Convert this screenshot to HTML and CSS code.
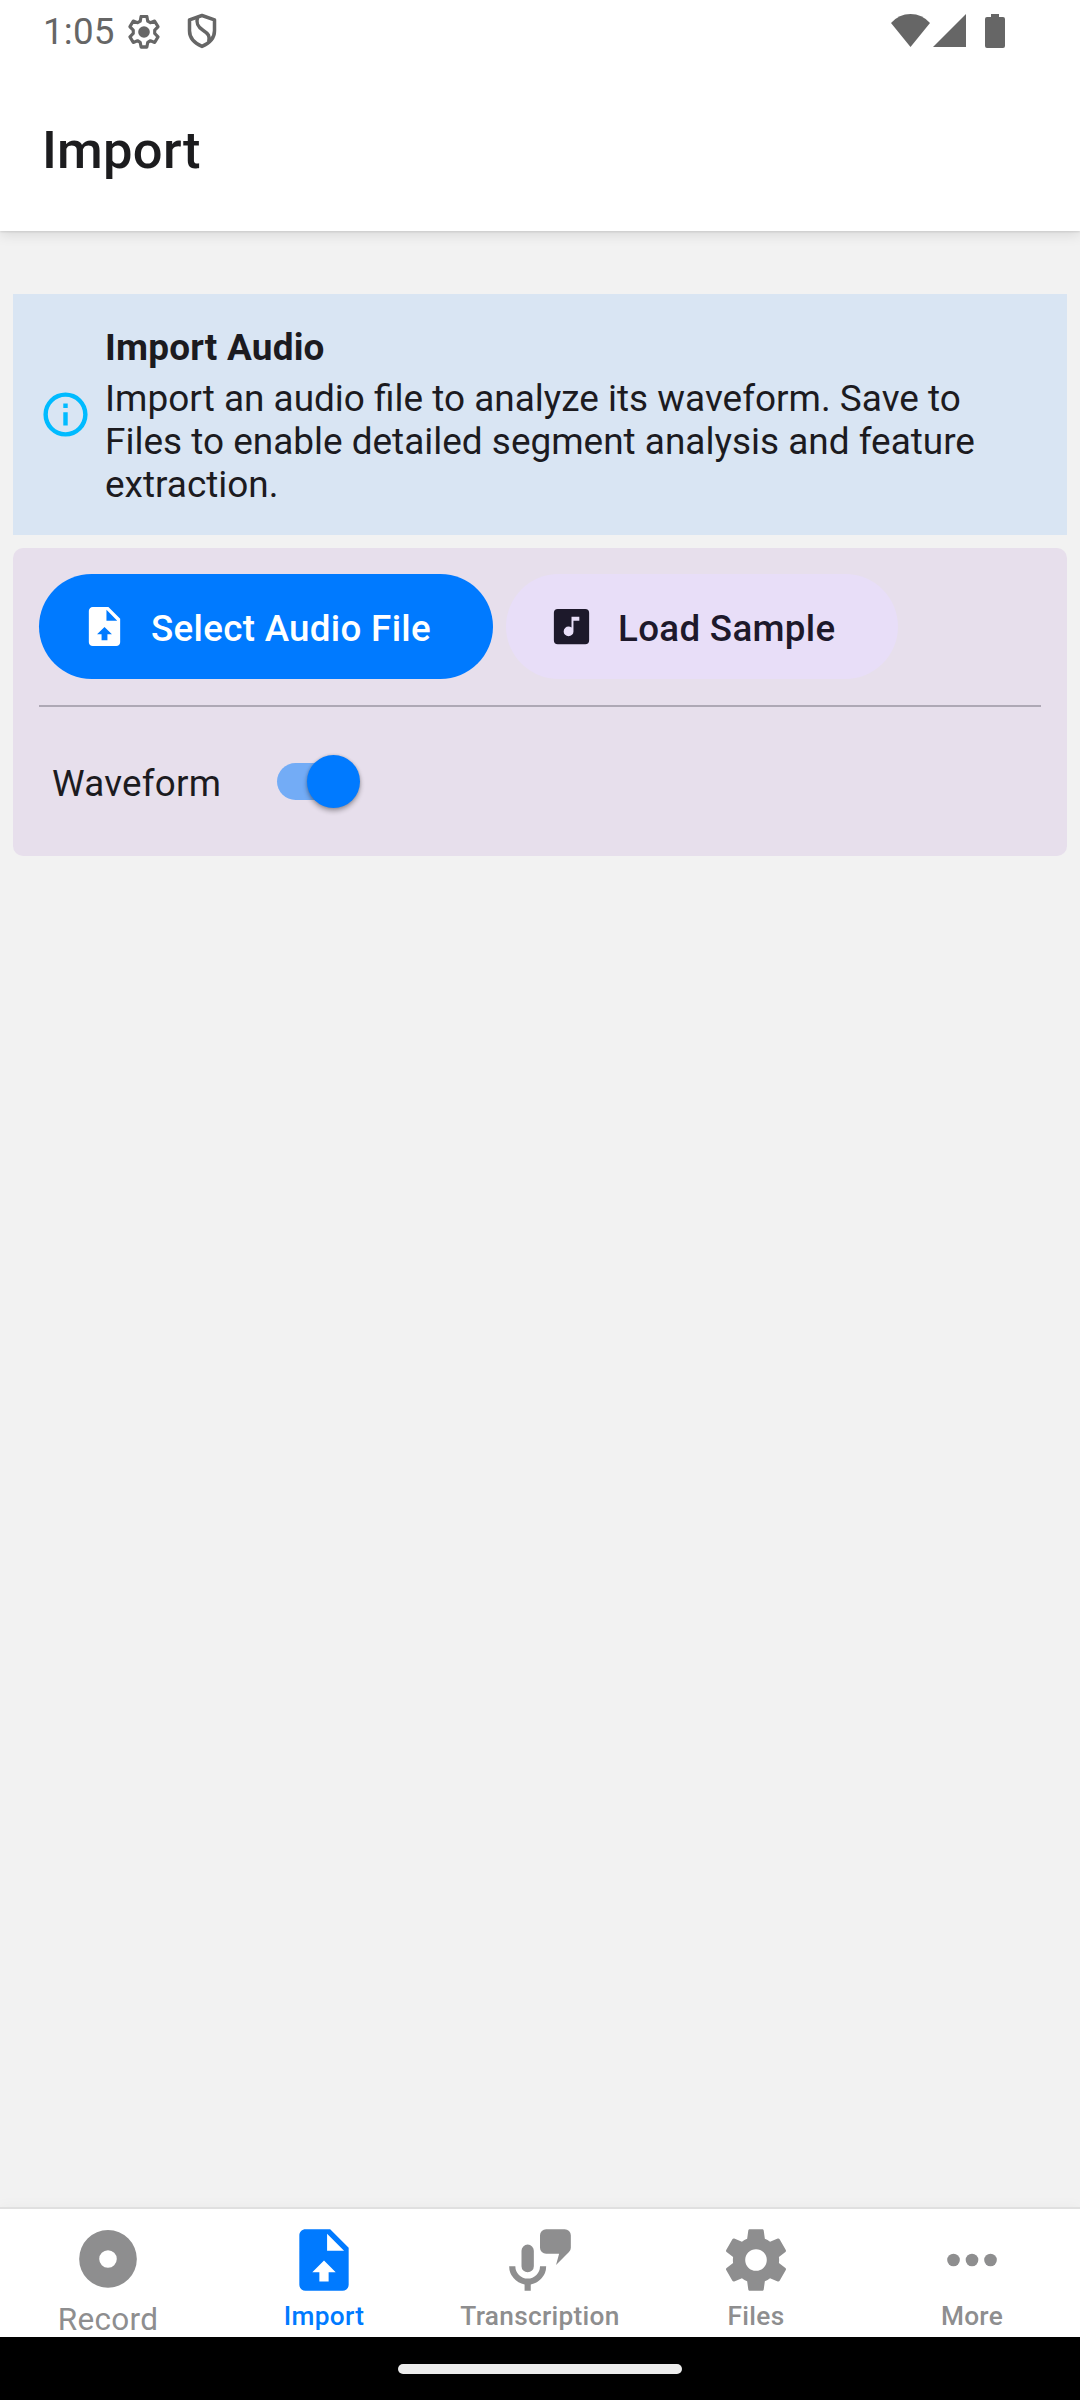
FILE: index.html
```html
<!DOCTYPE html>
<html lang="en">
<head>
<meta charset="utf-8">
<title>Import</title>
<link rel="stylesheet" href="styles.css">
</head>
<body>
<div class="screen">
  <header class="app-header">
    <div class="status-bar">
      <span class="clock">1:05</span>
      <svg class="status-gear" viewBox="0 0 34 34"><path d="M14.2 2h5.6l.8 4.3 2.5 1.4 4.1-1.5 3.3 5.2-3.2 3.1v3l3.2 3.2-3.2 5.1-4.1-1.5-2.6 1.5-.8 4.2h-5.6l-.8-4.2-2.6-1.5-4.1 1.5-3.2-5.1 3.2-3.2v-3L3.5 11.4l3.2-5.2 4.2 1.5 2.5-1.4z" transform="translate(-.7 -.7) scale(1.04 1.09)" fill="none" stroke="#666" stroke-width="3" stroke-linejoin="round"/><circle cx="17" cy="17" r="5.8" fill="#666"/></svg>
      <svg class="status-shield" viewBox="0 0 30 36" fill="none" stroke="#666" stroke-width="3.5" stroke-linejoin="round"><path d="M15 2.5l12.5 4.3v11c0 7-5 12.4-12.500 15.600C7.500 30.200 2.500 24.800 2.500 17.800v-11z"/><path d="M10.500 4.500c-1.500 5.500-.5 9 5.500 12.700 5.500 3.500 7 6 5.800 11.300"/></svg>
      <div class="status-right">
        <svg class="wifi" viewBox="0 0 39 33"><path d="M0 9Q8 0 19.500 0T39 9L19.500 33z" fill="#666"/></svg>
        <svg class="signal" viewBox="0 0 33 33"><path d="M33 0v33H0z" fill="#666"/></svg>
        <svg class="battery" viewBox="0 0 20 34"><path d="M6 0h8v3h4a2 2 0 0 1 2 2v27a2 2 0 0 1-2 2H2a2 2 0 0 1-2-2V5a2 2 0 0 1 2-2h4z" fill="#666"/></svg>
      </div>
    </div>
    <h1 class="title">Import</h1>
  </header>

  <main class="content">
    <section class="notice">
      <svg class="notice-icon" viewBox="0 0 24 24"><path d="M11 9h2V7h-2m1 13c-4.410 0-8-3.590-8-8s3.590-8 8-8 8 3.590 8 8-3.590 8-8 8m0-18A10 10 0 0 0 2 12a10 10 0 0 0 10 10 10 10 0 0 0 10-10A10 10 0 0 0 12 2m-1 15h2v-6h-2z"/></svg>
      <div class="notice-text">
        <h2>Import Audio</h2>
        <p>Import an audio file to analyze its waveform. Save to Files to enable detailed segment analysis and feature extraction.</p>
      </div>
    </section>

    <section class="card">
      <div class="actions">
        <div class="button primary">
          <svg viewBox="0 0 24 24"><path d="M14 2H6c-1.110 0-2 .890-2 2v16c0 1.110.890 2 2 2h12c1.110 0 2-.890 2-2V8l-6-6m-.500 14v3h-3v-3H8.200l3.800-3.800 3.800 3.800h-2.300M13 9V3.500L18.500 9z"/></svg>
          <span>Select Audio File</span>
        </div>
        <div class="button tonal">
          <svg viewBox="0 0 24 24"><path d="M16 9h-3v5.500a2.500 2.500 0 0 1-2.500 2.500A2.500 2.500 0 0 1 8 14.500a2.500 2.500 0 0 1 2.500-2.500c.570 0 1.080.190 1.500.500V7h4m3-4H5a2 2 0 0 0-2 2v14a2 2 0 0 0 2 2h14a2 2 0 0 0 2-2V5a2 2 0 0 0-2-2z"/></svg>
          <span>Load Sample</span>
        </div>
      </div>
      <div class="divider"></div>
      <div class="option">
        <span class="option-label">Waveform</span>
        <div class="switch"><div class="thumb"></div></div>
      </div>
    </section>
  </main>

  <nav class="tabs">
    <div class="tab record">
      <svg viewBox="0 0 24 24"><path fill-rule="evenodd" d="M12 2.300a9.350 9.350 0 1 0 0 18.700 9.350 9.350 0 0 0 0-18.700m0 6.500a2.850 2.850 0 1 1 0 5.700 2.850 2.850 0 0 1 0-5.700"/></svg>
      <span>Record</span>
    </div>
    <div class="tab active">
      <svg viewBox="0 0 24 24"><path d="M14 2H6c-1.110 0-2 .890-2 2v16c0 1.110.890 2 2 2h12c1.110 0 2-.890 2-2V8l-6-6m-.500 14v3h-3v-3H8.200l3.800-3.800 3.800 3.800h-2.300M13 9V3.500L18.500 9z"/></svg>
      <span>Import</span>
    </div>
    <div class="tab">
      <svg viewBox="0 0 24 24"><path d="M8 7a2 2 0 0 0-2 2v5a2 2 0 0 0 4 0V9a2 2 0 0 0-2-2m6 7a6 6 0 0 1-5 5.910V22H7v-2.090A6 6 0 0 1 2 14h2a4 4 0 0 0 8 0h2m6-12h-6a2 2 0 0 0-2 2v4a2 2 0 0 0 2 2h4.200l-1 3.600 4.200-4.200A2 2 0 0 0 22 8V4a2 2 0 0 0-2-2z"/></svg>
      <span>Transcription</span>
    </div>
    <div class="tab">
      <svg viewBox="0 0 24 24"><path d="M12,15.5A3.5,3.5 0 0,1 8.5,12A3.5,3.5 0 0,1 12,8.5A3.5,3.5 0 0,1 15.5,12A3.5,3.5 0 0,1 12,15.5M19.43,12.97C19.47,12.65 19.5,12.33 19.5,12C19.5,11.67 19.47,11.34 19.43,11L21.54,9.37C21.73,9.22 21.78,8.95 21.66,8.73L19.66,5.27C19.54,5.05 19.27,4.96 19.05,5.05L16.56,6.05C16.04,5.66 15.5,5.32 14.87,5.07L14.5,2.42C14.46,2.18 14.25,2 14,2H10C9.75,2 9.54,2.18 9.5,2.42L9.13,5.07C8.5,5.32 7.96,5.66 7.44,6.05L4.95,5.05C4.73,4.96 4.46,5.05 4.34,5.27L2.34,8.73C2.21,8.95 2.27,9.22 2.46,9.37L4.57,11C4.53,11.34 4.5,11.67 4.5,12C4.5,12.33 4.53,12.65 4.57,12.97L2.46,14.63C2.27,14.78 2.21,15.05 2.34,15.27L4.34,18.73C4.46,18.95 4.73,19.03 4.95,18.95L7.44,17.94C7.96,18.34 8.5,18.68 9.13,18.93L9.5,21.58C9.54,21.82 9.75,22 10,22H14C14.25,22 14.46,21.82 14.5,21.58L14.87,18.93C15.5,18.67 16.04,18.34 16.56,17.94L19.05,18.95C19.27,19.03 19.54,18.95 19.66,18.73L21.66,15.27C21.78,15.05 21.73,14.78 21.54,14.63L19.43,12.97Z"/></svg>
      <span>Files</span>
    </div>
    <div class="tab">
      <svg viewBox="0 0 24 24"><circle cx="6" cy="12" r="2.050"/><circle cx="12" cy="12" r="2.050"/><circle cx="18" cy="12" r="2.050"/></svg>
      <span>More</span>
    </div>
  </nav>
  <div class="gesture-bar"><div class="handle"></div></div>
</div>
</body>
</html>
```
FILE: styles.css
```css
* { box-sizing: border-box; }

body {
  margin: 0;
  font-family: Roboto, sans-serif;
  color: #1c1b1f;
  background: #f2f2f2;
}

svg { display: block; flex: none; }
h1, h2, p { margin: 0; }
span { white-space: nowrap; }

.screen {
  width: 1080px;
  height: 2400px;
  display: flex;
  flex-direction: column;
  overflow: hidden;
  background: #f2f2f2;
}

.app-header {
  height: 231px;
  background: #fff;
  box-shadow: 0 1px 2px rgba(0, 0, 0, .1), 0 4px 12px rgba(0, 0, 0, .1);
}

.status-bar {
  height: 63px;
  display: flex;
  align-items: flex-start;
  padding: 0 75px 0 43px;
}

.clock {
  width: 84px;
  padding-top: 10px;
  font-size: 36.75px;
  line-height: 43px;
  letter-spacing: .2px;
  color: #666;
}

.status-gear { width: 34px; height: 34px; margin-top: 15px; }
.status-shield { width: 30px; height: 36px; margin: 13px 0 0 26px; }

.status-right {
  margin-left: auto;
  padding-top: 14px;
  display: flex;
}

.wifi { width: 39px; height: 33px; }
.signal { width: 33px; height: 33px; margin-left: 3px; }
.battery { width: 20px; height: 34px; margin-left: 19px; }

.title {
  padding: 56px 42px 0;
  font-size: 52.5px;
  font-weight: 500;
  line-height: 62px;
  letter-spacing: .25px;
  color: #1c1c1e;
}

.content {
  flex: 1;
  display: flex;
  flex-direction: column;
  gap: 13px;
  padding: 63px 13px 0;
}

.notice {
  height: 241px;
  display: flex;
  align-items: center;
  gap: 13px;
  padding: 0 26px;
  background: #d9e5f3;
}

.notice-icon { width: 53px; height: 53px; fill: #00bbff; }

.notice-text {
  width: 900px;
  padding-top: 3px;
  display: flex;
  flex-direction: column;
  gap: 8px;
  font-size: 36.95px;
  line-height: 43px;
}

.notice-text h2 { font-size: inherit; font-weight: 700; letter-spacing: .2px; }

.card {
  height: 308px;
  padding: 26px;
  border-radius: 10px;
  background: #e7dfec;
}

.actions { display: flex; gap: 13px; }

.button {
  height: 105px;
  display: flex;
  align-items: center;
  border-radius: 53px;
  font-size: 36.75px;
  font-weight: 500;
  line-height: 52px;
  letter-spacing: .3px;
}

.button svg { width: 47px; height: 47px; fill: currentColor; }
.button span { padding-top: 4px; }
.primary { width: 454px; padding-left: 42px; gap: 23px; color: #fff; background: #007aff; }
.tonal { width: 392px; padding-left: 42px; gap: 23px; color: #1d192b; background: #e8def8; }

.divider { height: 2px; margin-top: 26px; background: #aea8b5; }

.option {
  height: 149px;
  display: flex;
  align-items: center;
  padding-left: 13px;
}

.option-label {
  width: 225px;
  padding-top: 4px;
  font-size: 36.75px;
  line-height: 43px;
  letter-spacing: .25px;
}

.switch {
  width: 83px;
  height: 37px;
  display: flex;
  justify-content: flex-end;
  align-items: center;
  border-radius: 19px;
  background: linear-gradient(to right, #73acf6 72px, transparent 72px);
}

.thumb {
  width: 53px;
  height: 53px;
  flex: none;
  border-radius: 50%;
  background: #007aff;
  box-shadow: 0 3px 5px rgba(0, 0, 0, .32), 0 0 3px rgba(0, 0, 0, .15);
}

.tabs {
  height: 130px;
  display: flex;
  border-top: 2px solid #e0e0e0;
  background: #fff;
  box-shadow: 0 0 14px rgba(0, 0, 0, .04);
}

.tab {
  width: 216px;
  display: flex;
  flex-direction: column;
  align-items: center;
  padding-top: 14px;
  font-size: 26.25px;
  font-weight: 500;
  line-height: 31px;
  letter-spacing: .3px;
  color: #8e8e8f;
}

.tab svg { width: 74px; height: 74px; margin-bottom: 4px; fill: currentColor; }
.tab.active { color: #007aff; }
.tab.record { font-size: 31.5px; font-weight: 400; line-height: 37px; }

.gesture-bar {
  height: 63px;
  display: flex;
  justify-content: center;
  align-items: flex-start;
  padding-top: 27px;
  background: #000;
}

.handle { width: 284px; height: 10px; border-radius: 5px; background: #ececec; }
```
